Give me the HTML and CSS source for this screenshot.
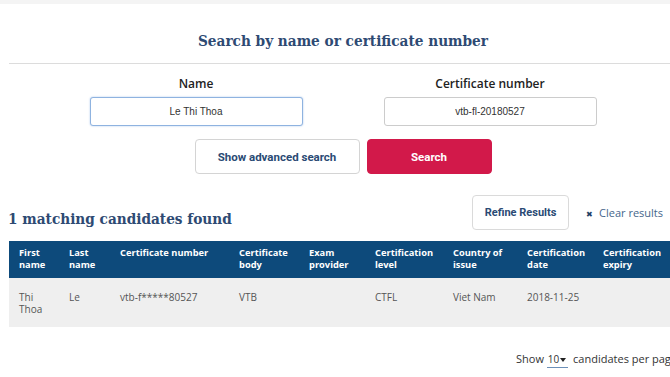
FILE: index.html
```html
<!DOCTYPE html>
<html lang="en">
<head>
<meta charset="UTF-8">
<meta name="viewport" content="width=device-width, initial-scale=1.0">
<title>Certificate search</title>
<link rel="stylesheet" href="styles.css">
</head>
<body>

<div class="topbar"></div>

<div class="container">
  <h1 class="search-title">Search by name or certificate number</h1>

  <form class="search-form">
    <div class="fields">
      <div class="field">
        <label for="name">Name</label>
        <input id="name" class="input focused" type="text" value="Le Thi Thoa">
      </div>
      <div class="field">
        <label for="cert">Certificate number</label>
        <input id="cert" class="input" type="text" value="vtb-fl-20180527">
      </div>
    </div>
    <div class="actions">
      <button type="button" class="btn btn-outline">Show advanced search</button>
      <button type="button" class="btn btn-primary">Search</button>
    </div>
  </form>

  <div class="results-head">
    <h2 class="results-title">1 matching candidates found</h2>
    <div class="results-tools">
      <button type="button" class="btn btn-refine">Refine Results</button>
      <a class="clear-link" href="#"><span class="clear-x">&#10006;</span>Clear results</a>
    </div>
  </div>

  <table class="results">
    <thead>
      <tr>
        <th class="c-first">First name</th>
        <th class="c-last">Last name</th>
        <th class="c-num">Certificate number</th>
        <th class="c-body">Certificate body</th>
        <th class="c-exam">Exam provider</th>
        <th class="c-level">Certification level</th>
        <th class="c-country">Country of issue</th>
        <th class="c-date">Certification date</th>
        <th class="c-expiry">Certification expiry</th>
      </tr>
    </thead>
    <tbody>
      <tr>
        <td>Thi Thoa</td>
        <td>Le</td>
        <td>vtb-f*****80527</td>
        <td>VTB</td>
        <td></td>
        <td>CTFL</td>
        <td>Viet Nam</td>
        <td>2018-11-25</td>
        <td></td>
      </tr>
    </tbody>
  </table>

  <div class="pager">
    Show <span class="per-page">10<span class="caret"></span></span> candidates per page
  </div>
</div>

</body>
</html>
```

FILE: styles.css
```css
body {
  margin: 0;
  background: #fff;
  font-family: "Open Sans", sans-serif;
  overflow: hidden;
}

.topbar {
  height: 4px;
  background: #f4f4f4;
}

.container {
  width: 668px;
  margin-left: 9px;
}

.search-title {
  margin: 0;
  padding: 28px 0 13px;
  text-align: center;
  font-family: "DejaVu Serif", serif;
  font-stretch: condensed;
  font-size: 15.2px;
  font-weight: bold;
  color: #2e4a73;
  border-bottom: 1px solid #dcdcdc;
}

.search-form {
  width: 588px;
  margin: 0 auto;
}

.fields {
  display: grid;
  grid-template-columns: 1fr 1fr;
  padding-top: 12px;
}

.field {
  display: flex;
  flex-direction: column;
  align-items: center;
}

.field label {
  font-size: 12px;
  font-weight: 600;
  color: #222;
  line-height: 16px;
  margin-bottom: 5px;
}

.input {
  width: 213px;
  height: 29px;
  box-sizing: border-box;
  border: 1px solid #ccc;
  border-radius: 3px;
  text-align: center;
  font-family: "Liberation Sans", Arial, sans-serif;
  font-size: 10px;
  color: #333;
}

.input.focused {
  border-color: #8fb3e0;
  box-shadow: 0 0 2px #a9c4ea;
}

.actions {
  display: flex;
  justify-content: center;
  gap: 7px;
  margin-top: 13px;
}

.btn {
  height: 35px;
  box-sizing: border-box;
  border-radius: 4px;
  font-family: Roboto, sans-serif;
  font-weight: bold;
  font-size: 11.5px;
  cursor: pointer;
}

.btn-outline {
  width: 165px;
  background: #fff;
  border: 1px solid #d4d4d4;
  color: #2a4a74;
}

.btn-primary {
  width: 125px;
  background: #d2194a;
  border: 1px solid #d2194a;
  color: #fff;
}

.results-head {
  display: flex;
  justify-content: space-between;
  align-items: flex-end;
  margin-top: 21px;
}

.results-title {
  margin: 0 0 2px -1px;
  font-family: "DejaVu Serif", serif;
  font-stretch: condensed;
  font-size: 15.2px;
  font-weight: bold;
  color: #2e4a73;
}

.results-tools {
  display: flex;
  align-items: center;
  gap: 17px;
  padding-right: 14px;
}

.btn-refine {
  width: 97px;
  background: #fff;
  border: 1px solid #dadada;
  color: #2a4a74;
  font-size: 11px;
}

.clear-link {
  font-size: 11px;
  color: #46668c;
  text-decoration: none;
}

.clear-x {
  font-size: 8px;
  color: #1f3f66;
  margin-right: 6px;
}

.results {
  margin-top: 11px;
  border-collapse: collapse;
  width: 664px;
  table-layout: fixed;
}

.results th {
  background: #0d4a7b;
  color: #fff;
  text-align: left;
  vertical-align: top;
  font-family: "Open Sans", sans-serif;
  font-size: 9.3px;
  font-weight: bold;
  line-height: 12px;
  padding: 6px 10px 7px;
}

.results td {
  background: #efefef;
  color: #555;
  vertical-align: top;
  font-size: 10px;
  line-height: 11.5px;
  padding: 14px 10px 12px;
}

.c-first { width: 30px; }
.c-last { width: 31px; }
.c-num { width: 99px; }
.c-body { width: 50px; }
.c-exam { width: 46px; }
.c-level { width: 58px; }
.c-country { width: 54px; }
.c-date { width: 56px; }
.c-expiry { width: 60px; }

.pager {
  text-align: right;
  margin-top: 24px;
  font-size: 11px;
  color: #333;
  white-space: nowrap;
}

.per-page {
  display: inline-block;
  border-bottom: 1px solid #6b8fb8;
  padding: 0 9px 1px 1px;
  position: relative;
  font-size: 10px;
  margin-right: 2px;
}

.caret {
  position: absolute;
  right: 2px;
  top: 6px;
  border-left: 3px solid transparent;
  border-right: 3px solid transparent;
  border-top: 4px solid #222;
}
```
